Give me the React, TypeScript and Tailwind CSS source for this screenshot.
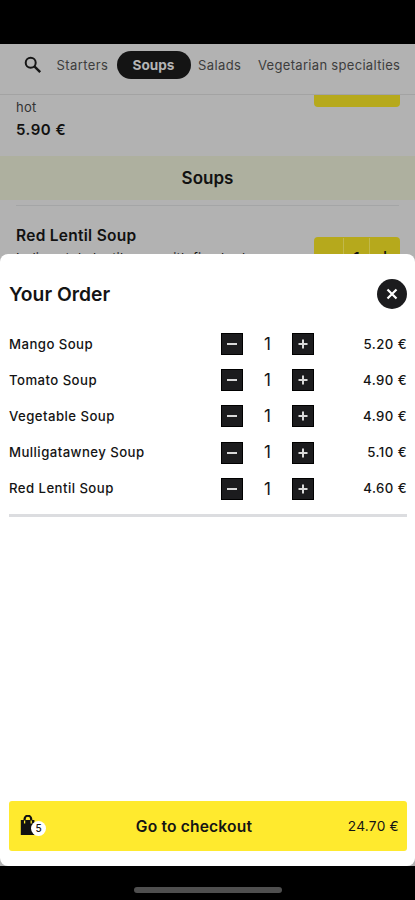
const ORDER = [
  { name: 'Mango Soup', qty: 1, price: '5.20 €' },
  { name: 'Tomato Soup', qty: 1, price: '4.90 €' },
  { name: 'Vegetable Soup', qty: 1, price: '4.90 €' },
  { name: 'Mulligatawney Soup', qty: 1, price: '5.10 €' },
  { name: 'Red Lentil Soup', qty: 1, price: '4.60 €' },
]

function QtyButton({ plus = false }: { plus?: boolean }) {
  return (
    <button aria-label={plus ? 'Add one' : 'Remove one'} className="flex size-[22px] items-center justify-center bg-[#1c1c1e] border border-black">
      <svg width="10" height="10" viewBox="0 0 10 10" fill="none" stroke="#d9d9d9" strokeWidth="2">
        <path d={plus ? 'M0.5 5h9M5 0.5v9' : 'M0 5h10'} />
      </svg>
    </button>
  )
}

function Menu() {
  return (
    <div className="h-[822px] overflow-hidden bg-[#b2b2b2] text-[#111]">
      {/* Category tabs */}
      <nav className="flex h-[51px] items-start border-b border-[#a3a3a3] pt-[7px] text-[13px] leading-[28px] text-[#3d3d3d] whitespace-nowrap">
        <svg className="mt-[5px] ml-6 shrink-0" width="18" height="18" viewBox="0 0 18 18" fill="none" stroke="#151515" strokeWidth="2">
          <circle cx="6.7" cy="6.7" r="5" />
          <path d="M10.4 10.4l5.8 5.8" strokeWidth="2.4" />
        </svg>
        <span className="ml-[14.5px] w-[60px] tracking-[0.4px]">Starters</span>
        <span className="h-[28px] w-[74px] rounded-full bg-[#141414] text-center text-[13.6px] font-bold text-[#b5b5b5]">Soups</span>
        <span className="ml-[7.5px] w-[60px] tracking-[0.4px]">Salads</span>
        <span className="tracking-[0.31px]">Vegetarian specialties</span>
      </nav>

      {/* Previous dish, scrolled under the tabs */}
      <div className="flex h-[61px] justify-between pl-4 pr-[15px]">
        <div>
          <p className="pt-[2px] text-[13px] leading-5 tracking-[0.3px] text-[#333]">hot</p>
          <p className="mt-[3px] text-[15px] leading-5 font-semibold tracking-[0.5px]">5.90 €</p>
        </div>
        <div className="h-[12px] w-[86px] rounded-b-[4px] bg-[#b6a91c]" />
      </div>

      <h2 className="h-[44px] bg-[#aeb09f] text-center text-[17px] leading-[44px] font-semibold">Soups</h2>
      <div className="mx-4 mt-[5px] border-t border-[#a4a5a6]" />

      {/* Current dish */}
      <div className="flex justify-between pl-4 pr-[15px]">
        <div>
          <h3 className="mt-[20px] text-[15.5px] leading-5 font-semibold tracking-[0.28px]">Red Lentil Soup</h3>
          <p className="mt-[2px] text-[13px] leading-5 tracking-[0.23px] whitespace-nowrap">Indian style lentil soup with fine herbs</p>
        </div>
        <div className="mt-[31px] flex h-[34px] w-[86px] divide-x divide-[#c1b84c] rounded-[4px] bg-[#b6a91c] pt-px text-center text-[15px] leading-[32px] font-semibold">
          <span className="w-[30px]">−</span>
          <span className="w-[26px] pt-[4px]">1</span>
          <span className="flex-1">+</span>
        </div>
      </div>
    </div>
  )
}

function OrderSheet() {
  return (
    <section className="absolute inset-x-0 top-[254px] flex h-[612px] flex-col rounded-[8px] bg-white pl-[9px] pr-2 text-[#141414]">
      <header className="flex h-[72px] items-center justify-between pt-2">
        <h1 className="text-[19.3px] font-semibold">Your Order</h1>
        <button aria-label="Close" className="flex size-[30px] items-center justify-center rounded-full bg-[#1c1c1e]">
          <svg width="12" height="12" viewBox="0 0 12 12" stroke="#fff" strokeWidth="2.2">
            <path d="M1.5 1.5l9 9M10.5 1.5l-9 9" />
          </svg>
        </button>
      </header>

      <ul className="border-b-[3px] border-[#dcdde0] pb-[7px]">
        {ORDER.map(item => (
          <li key={item.name} className="flex h-[36.2px] items-center text-[13.2px] font-medium tracking-[0.44px]">
            <span className="w-[212px] pt-px">{item.name}</span>
            <QtyButton />
            <span className="w-[49px] pt-px text-center text-[17px] font-normal tracking-normal">{item.qty}</span>
            <QtyButton plus />
            <span className="ml-auto pt-px">{item.price}</span>
          </li>
        ))}
      </ul>

      {/* Checkout bar */}
      <button className="mt-auto mb-[15px] flex h-[50px] w-full items-center rounded-[3px] bg-[#ffea2e] pl-[11px] pr-2">
        <span className="relative h-[22px] w-[28px]">
          <svg width="17" height="22" viewBox="0 0 17 22" fill="none">
            <path d="M0.8 5h13.6v15H0.8z" fill="#111" />
            <path d="M4.6 8V4a3.3 3.3 0 0 1 6.6 0v4" stroke="#111" strokeWidth="2.2" />
            <path d="M4.6 5.4v3.2M11.2 5.4v3.2" stroke="#ffea2e" strokeWidth="1.3" />
          </svg>
          <span className="absolute top-[6px] left-[11px] flex size-[15px] items-center justify-center rounded-full bg-white text-[10px] font-medium">5</span>
        </span>
        <span className="flex-1 pt-[2px] pr-[8px] text-center text-[15.6px] font-semibold tracking-[0.17px]">Go to checkout</span>
        <span className="text-[13.7px] tracking-[0.25px]">24.70 €</span>
      </button>
    </section>
  )
}

export default function App() {
  return (
    <main className="relative h-[900px] w-[415px] overflow-hidden bg-black pt-[44px] font-['Inter','Liberation_Sans',sans-serif]">
      <Menu />
      <OrderSheet />
      {/* Home indicator */}
      <div className="mx-auto mt-[21px] h-[6px] w-[148px] rounded-full bg-[#4f4f4f]" />
    </main>
  )
}
